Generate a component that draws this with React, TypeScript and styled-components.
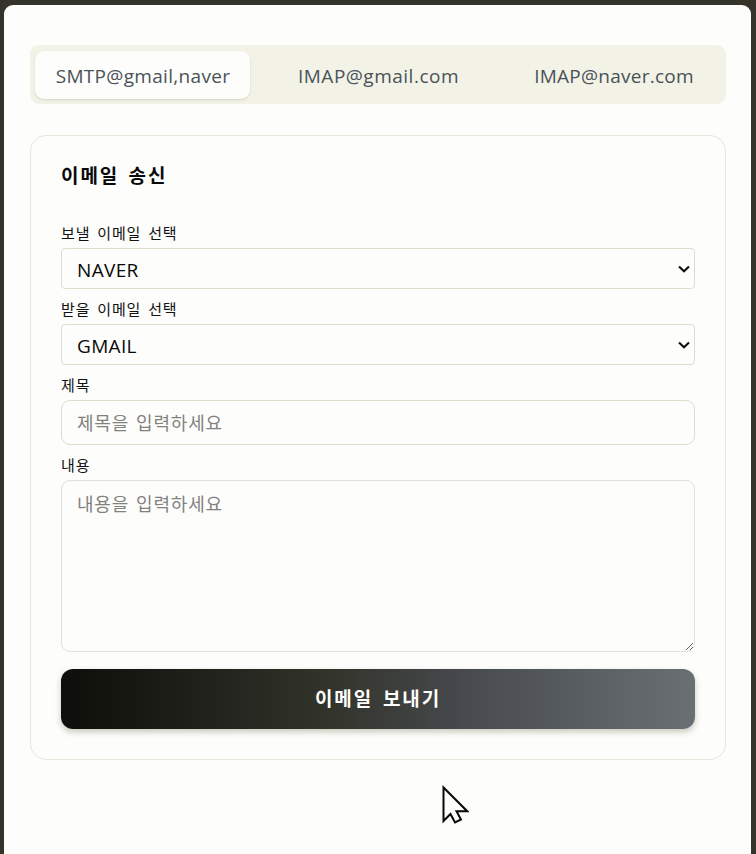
import React from "react";
import styled, { createGlobalStyle } from "styled-components";

const GlobalStyle = createGlobalStyle`
  *, *::before, *::after { box-sizing: border-box; }
  html, body { margin: 0; padding: 0; height: 100%; overflow: hidden; background: #34342b; }
  body, button, input, select, textarea {
    font-family: "Open Sans", "Noto Sans CJK KR", sans-serif;
  }
`;

const Backdrop = styled.div`
  position: relative;
  height: 854px;
  overflow: hidden;
  padding: 5px 5px 0 4px;
  background: #34342b;
`;

const Dialog = styled.main`
  height: 880px;
  padding: 40px 25px 0 26px;
  border-radius: 9px;
  background: #fdfdfc;
`;

const TabList = styled.nav`
  display: flex;
  justify-content: space-between;
  height: 59px;
  padding: 6px 5px 5px;
  border-radius: 9px;
  background: #f2f2e7;
`;

const Tab = styled.button<{ $active?: boolean; $spacing: number }>`
  width: 215px;
  height: 48px;
  padding: 1px 0 0 1px;
  border: 0;
  border-radius: 9px;
  color: #4a5257;
  font-size: 19px;
  line-height: 48px;
  letter-spacing: ${({ $spacing }) => $spacing}px;
  white-space: nowrap;
  background: ${({ $active }) => ($active ? "#fdfdfc" : "transparent")};
  box-shadow: ${({ $active }) => ($active ? "0 1px 2px rgba(80, 80, 70, 0.18)" : "none")};
`;

const Card = styled.form`
  display: flex;
  flex-direction: column;
  height: 625px;
  margin-top: 31px;
  padding: 24px 30px 30px;
  border: 1px solid #e6e6da;
  border-radius: 16px;
`;

const Title = styled.h2`
  height: 34px;
  margin: 0 0 29px;
  color: #080808;
  font-size: 19px;
  font-weight: 700;
  line-height: 33px;
  letter-spacing: 1.9px;
  word-spacing: 2.6px;
`;

const Label = styled.label`
  height: 20px;
  margin-bottom: 5px;
  color: #111;
  font-size: 15px;
  line-height: 20px;
  letter-spacing: 0.85px;
  word-spacing: 2.2px;
`;

const SelectBox = styled.div`
  display: grid;
  height: 41px;
  margin-bottom: 10px;
  align-items: center;

  & > * { grid-area: 1 / 1; }
  svg { justify-self: end; margin-right: 4px; pointer-events: none; }
`;

const Select = styled.select`
  width: 100%;
  height: 41px;
  padding: 2px 15px 0;
  appearance: none;
  border: 1px solid #dedecb;
  border-radius: 4px;
  color: #080808;
  font-size: 19px;
  letter-spacing: 0.35px;
  background: transparent;
`;

const Input = styled.input`
  height: 45px;
  margin-bottom: 10px;
  padding: 0 15px;
  border: 1px solid #dedece;
  border-radius: 9px;
  font-size: 18px;
  letter-spacing: 0.8px;
  word-spacing: 1.5px;
  background: transparent;
  &::placeholder { color: #81817d; opacity: 1; }
`;

const TextArea = styled.textarea`
  height: 172px;
  margin: 0 0 17px;
  padding: 10px 15px;
  border: 1px solid #e0e0d8;
  border-radius: 9px;
  font-size: 18px;
  line-height: 26px;
  letter-spacing: 0.8px;
  word-spacing: 1.5px;
  background: transparent;
  resize: vertical;
  &::placeholder { color: #81817d; opacity: 1; }
`;

const SendButton = styled.button`
  height: 60px;
  padding: 0 0 2px;
  border: 0;
  border-radius: 12px;
  color: #fdfdfb;
  font-size: 19px;
  font-weight: 700;
  letter-spacing: 1.9px;
  word-spacing: 3px;
  background: linear-gradient(90deg, #0e0e0a 0%, #20211b 22%, #323329 42%, #484b50 65%, #595e63 82%, #6a6f74 100%);
  box-shadow: 0 3px 6px rgba(90, 90, 50, 0.32);
`;

const Cursor = styled.svg`
  position: absolute;
  left: 441px;
  top: 784px;
`;

const Chevron = () => (
  <svg width="14" height="10" viewBox="0 0 14 10" fill="none">
    <path d="M2 2.5 7 7.3 12 2.5" stroke="#111" strokeWidth="2.1" />
  </svg>
);

export default function App() {
  return (
    <>
      <GlobalStyle />
      <Backdrop>
        <Dialog>
          <TabList>
            <Tab $active $spacing={0.32}>SMTP@gmail,naver</Tab>
            <Tab $spacing={0.5}>IMAP@gmail.com</Tab>
            <Tab $spacing={0.25}>IMAP@naver.com</Tab>
          </TabList>
          <Card>
            <Title>이메일 송신</Title>
            <Label htmlFor="from">보낼 이메일 선택</Label>
            <SelectBox>
              <Select id="from"><option>NAVER</option></Select>
              <Chevron />
            </SelectBox>
            <Label htmlFor="to">받을 이메일 선택</Label>
            <SelectBox>
              <Select id="to"><option>GMAIL</option></Select>
              <Chevron />
            </SelectBox>
            <Label htmlFor="subject">제목</Label>
            <Input id="subject" placeholder="제목을 입력하세요" />
            <Label htmlFor="message">내용</Label>
            <TextArea id="message" placeholder="내용을 입력하세요" />
            <SendButton type="button">이메일 보내기</SendButton>
          </Card>
        </Dialog>
        <Cursor width="28" height="41" viewBox="0 0 28 41">
          <path d="M2.5 3.5V37L9.5 30 14 38.5 20 35.5 15.5 27.2H26.2Z" fill="#fdfdfb" stroke="#080808" strokeWidth="2" />
        </Cursor>
      </Backdrop>
    </>
  );
}
